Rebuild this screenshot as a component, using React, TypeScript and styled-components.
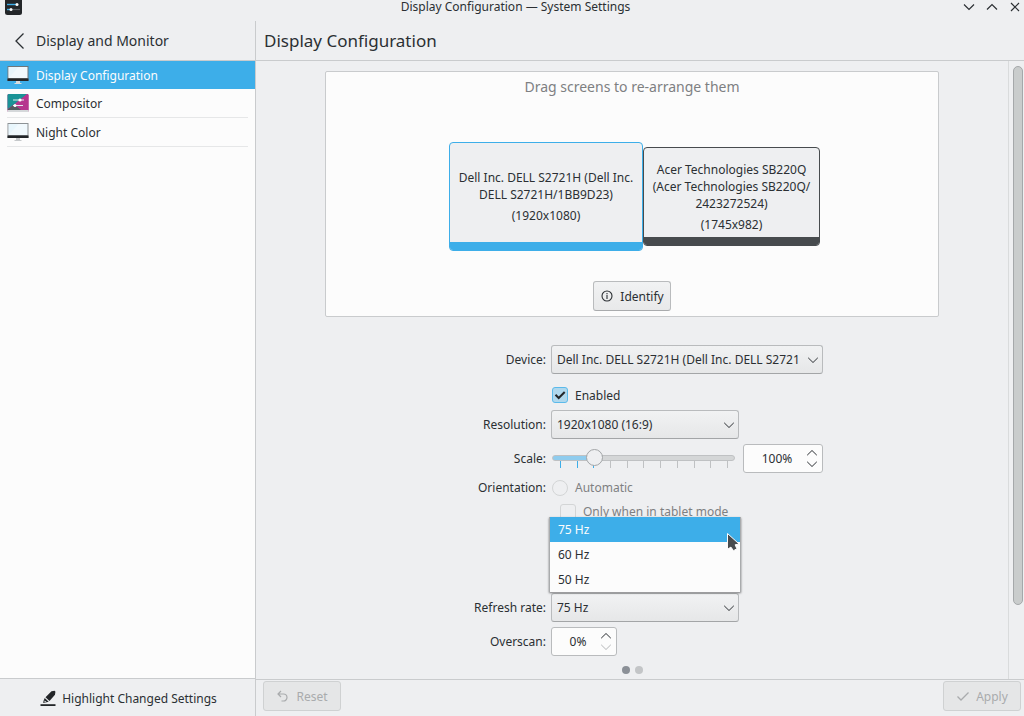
import React, { useState } from 'react';
import styled, { createGlobalStyle, css } from 'styled-components';

const c = {
  window: '#eeeff1',
  view: '#fcfcfc',
  text: '#2b2f33',
  muted: '#7e8082',
  disabled: '#a9abad',
  line: '#c9cbcd',
  border: '#b9bbbd',
  accent: '#3daee9',
  dark: '#474b4e',
};

const GlobalStyle = createGlobalStyle`
  *, *::before, *::after { box-sizing: border-box; }
  body { margin: 0; background: ${c.window}; }
  body, button, input, select {
    font-family: "Noto Sans", sans-serif;
    font-size: 12px;
    line-height: 17px;
    color: ${c.text};
  }
  h1, h2, p, ul { margin: 0; padding: 0; font-weight: 400; }
  ul { list-style: none; }
`;

const Window = styled.div`
  min-height: 100vh;
  display: flex;
  flex-direction: column;
  background: ${c.window};
`;

const TitleBar = styled.header`
  display: grid;
  grid-template-columns: 64px 1fr 60px;
  height: 21px;
  padding: 0 2px 0 5px;
  align-items: start;
`;

const WindowTitle = styled.div`
  line-height: 14px;
  text-align: center;
`;

const WindowControls = styled.div`
  display: flex;
  justify-content: flex-end;
  gap: 9px;
`;

const PlainButton = styled.button`
  display: flex;
  align-items: center;
  justify-content: center;
  padding: 0;
  border: 0;
  background: none;
`;

const ControlButton = styled(PlainButton)`
  width: 14px;
  height: 14px;
`;

const Body = styled.div`
  flex: 1;
  display: grid;
  grid-template-columns: 256px minmax(0, 1fr);
`;

const Sidebar = styled.nav`
  display: flex;
  flex-direction: column;
  border-right: 1px solid ${c.line};
  background: ${c.view};
`;

const SidebarHeader = styled.div`
  display: flex;
  align-items: center;
  gap: 8px;
  height: 40px;
  padding-left: 12px;
  border-bottom: 1px solid ${c.line};
  background: ${c.window};
`;

const SidebarTitle = styled.h2`
  font-size: 14px;
  line-height: 20px;
`;

const BackButton = styled(PlainButton)`
  width: 16px;
  height: 20px;
`;

const NavList = styled.ul`
  flex: 1;
`;

const NavItem = styled.li<{ $active?: boolean }>`
  padding: 0 7px;
  ${p => p.$active && css`background: ${c.accent};`}
`;

const NavLink = styled.a<{ $active?: boolean }>`
  display: flex;
  align-items: center;
  gap: 7px;
  height: ${p => (p.$active ? 28 : 29)}px;
  color: ${p => (p.$active ? c.view : c.text)};
  border-bottom: ${p => (p.$active ? '0' : '1px solid #e6e7e8')};
  text-decoration: none;
`;

const SidebarFooter = styled.div`
  display: flex;
  justify-content: center;
  height: 38px;
  padding: 1px 0 0 2px;
  border-top: 1px solid ${c.line};
  background: ${c.window};
`;

const HighlightButton = styled(PlainButton)`
  gap: 6px;
`;

const Main = styled.main`
  display: flex;
  flex-direction: column;
  min-width: 0;
`;

const MainHeader = styled.div`
  display: flex;
  align-items: center;
  height: 40px;
  padding-left: 8px;
  border-bottom: 1px solid ${c.line};
`;

const PageTitle = styled.h1`
  font-size: 17px;
  line-height: 24px;
`;

const Scroller = styled.div`
  flex: 1;
  display: flex;
`;

const Content = styled.div`
  flex: 1;
  min-width: 0;
  padding: 10px 69px 0;
`;

const ScrollTrack = styled.div`
  width: 16px;
  padding: 5px 0 0 4px;
  border-left: 1px solid #d9dbdc;
`;

const ScrollThumb = styled.div`
  width: 10px;
  height: 88%;
  border: 1px solid #a5a8aa;
  border-radius: 5px;
  background: #c9cccc;
`;

const Arrangement = styled.section`
  display: flex;
  flex-direction: column;
  align-items: center;
  min-height: 246px;
  padding: 6px 0 5px;
  border: 1px solid ${c.line};
  border-radius: 2px;
  background: ${c.view};
`;

const Hint = styled.p`
  font-size: 14px;
  line-height: 18px;
  color: ${c.muted};
`;

const Screens = styled.div`
  flex: 1;
  display: flex;
  align-items: center;
  padding: 16px 0 0 5px;
`;

const Screen = styled.div<{ $primary?: boolean }>`
  position: relative;
  display: flex;
  flex-direction: column;
  align-items: center;
  justify-content: center;
  gap: 4px;
  width: ${p => (p.$primary ? 194 : 177)}px;
  height: ${p => (p.$primary ? 109 : 99)}px;
  padding: 0 5px;
  border: 1px solid ${p => (p.$primary ? c.accent : c.dark)};
  border-radius: 4px;
  background: ${c.window};
  text-align: center;
  overflow: hidden;

  &::after {
    content: '';
    position: absolute;
    inset: auto 0 0;
    height: 8px;
    background: ${p => (p.$primary ? c.accent : c.dark)};
  }
`;

const PushButton = styled.button`
  display: flex;
  align-items: center;
  justify-content: center;
  gap: 6px;
  width: 78px;
  height: 30px;
  padding: 0;
  border: 1px solid ${c.border};
  border-bottom-color: #a9abad;
  border-radius: 3px;
  background: linear-gradient(#f1f2f3, #e8e9ea);

  &:disabled {
    color: ${c.disabled};
    border-color: #cfd1d2;
    background: #e5e6e7;
  }
`;

const Form = styled.form`
  display: grid;
  grid-template-columns: 105px 272px;
  justify-content: center;
  gap: 5px;
  margin-top: 28px;
`;

const FieldLabel = styled.label`
  align-self: center;
  text-align: right;
`;

const Field = styled.div`
  grid-column: 2;
  display: flex;
  align-items: center;
  justify-content: space-between;
`;

const OptionRow = styled(Field)<{ $indent?: boolean; $spaced?: boolean }>`
  justify-content: flex-start;
  gap: 7px;
  height: ${p => (p.$spaced ? 26 : 19)}px;
  padding: ${p => (p.$spaced ? '6px' : '0')} 0 0 ${p => (p.$indent ? 9 : 1)}px;
`;

const ManualRow = styled(Field)`
  height: 62px;
`;

const SelectBox = styled.div<{ $wide?: boolean }>`
  position: relative;
  width: ${p => (p.$wide ? 272 : 188)}px;
  height: 29px;
`;

const Select = styled.select`
  appearance: none;
  width: 100%;
  height: 100%;
  padding: 0 17px 0 5px;
  border: 1px solid ${c.border};
  border-bottom-color: #a3a5a7;
  border-radius: 3px;
  background: linear-gradient(#f1f2f3, #e6e7e8);
`;

const SelectArrow = styled.span`
  position: absolute;
  inset: 0 4px 0 auto;
  display: flex;
  align-items: center;
  pointer-events: none;
`;

const Check = styled.input`
  appearance: none;
  width: 16px;
  height: 16px;
  margin: 0;
  border: 1px solid #d3d5d6;
  border-radius: ${p => (p.type === 'radio' ? 8 : 3)}px;

  &:checked {
    border-color: #5bbaeb;
    background: #b0d8ed;
  }
`;

const CheckBox = styled.span`
  position: relative;
  display: flex;

  svg {
    position: absolute;
    inset: 0;
    pointer-events: none;
  }
`;

const OptionLabel = styled.label<{ $disabled?: boolean }>`
  ${p => p.$disabled && css`color: ${c.muted};`}
`;

const SliderBox = styled.div`
  width: 184px;
  height: 29px;
  padding: 5px 0 0 1px;
`;

const Slider = styled.input`
  appearance: none;
  display: block;
  position: relative;
  width: 183px;
  height: 18px;
  margin: 0 0 -6px;
  background: none;

  &::-webkit-slider-runnable-track {
    height: 6px;
    border: 1px solid #bfc1c3;
    border-radius: 3px;
    background: linear-gradient(to right, #8fccee 22%, #d4d6d7 22%);
  }

  &::-webkit-slider-thumb {
    appearance: none;
    width: 17px;
    height: 17px;
    margin-top: -7px;
    border: 1px solid #a2a5a7;
    border-radius: 9px;
    background: ${c.window};
  }
`;

const Ticks = styled.div`
  display: flex;
  justify-content: space-between;
  padding: 0 7px 0 8px;
`;

const Tick = styled.span<{ $filled: boolean }>`
  width: 1px;
  height: 7px;
  background: ${p => (p.$filled ? c.accent : '#bfc1c3')};
`;

const SpinBox = styled.div<{ $small?: boolean }>`
  display: flex;
  width: ${p => (p.$small ? 66 : 80)}px;
  height: 29px;
  border: 1px solid ${c.border};
  border-radius: 3px;
  background: ${c.view};
`;

const SpinInput = styled.input`
  flex: 1;
  min-width: 0;
  padding: 0 0 0 4px;
  border: 0;
  background: none;
  text-align: center;
`;

const SpinButtons = styled.div`
  display: flex;
  flex-direction: column;
  justify-content: center;
  gap: 1px;
  width: 16px;
`;

const SpinButton = styled(PlainButton)`
  height: 10px;
  justify-content: flex-start;

  &:disabled { color: #b5b7b9; }
`;

const Popup = styled.ul`
  position: absolute;
  left: -2px;
  right: -2px;
  bottom: calc(100% + 1px);
  z-index: 1;
  border: solid #a9abad;
  border-width: 0 1px;
  background: ${c.view};
  box-shadow: 0 1px 2px rgba(0, 0, 0, 0.5);
`;

const PopupItem = styled.li<{ $active: boolean }>`
  display: flex;
  align-items: center;
  height: 25px;
  padding-left: 8px;
  ${p => p.$active && css`
    background: ${c.accent};
    color: ${c.view};
  `}
`;

const Pointer = styled.svg`
  position: absolute;
  top: 15px;
  right: 0;
`;

const Dots = styled.div`
  display: flex;
  justify-content: center;
  gap: 5px;
  padding: 10px 0 4px;
`;

const Dot = styled.span<{ $current?: boolean }>`
  width: 8px;
  height: 8px;
  border-radius: 4px;
  background: ${p => (p.$current ? '#8b9097' : '#c3c5c7')};
`;

const MainFooter = styled.footer`
  display: flex;
  justify-content: space-between;
  height: 37px;
  padding: 1px 3px 0 7px;
  border-top: 1px solid ${c.line};
`;

const Chevron = ({ up = false, size = 12 }: { up?: boolean; size?: number }) => (
  <svg width={size} height={size === 12 ? 8 : 14} viewBox={size === 12 ? '0 0 12 8' : '0 0 14 14'} fill="none" stroke="currentColor">
    {size === 12
      ? <path d={up ? 'M1.200 6.200 6 1.500l4.800 4.700' : 'M1.200 1.800 6 6.500l4.800-4.700'} />
      : <path d={up ? 'M2 9.500l5-4.900 5 4.900' : 'M2 4.500l5 4.900 5-4.900'} strokeWidth="1.200" />}
  </svg>
);

const AppIcon = () => (
  <svg width="17" height="16" viewBox="0 0 17 16">
    <path d="M0 0h17v12.500a2.500 2.500 0 0 1-2.500 2.500h-12A2.500 2.500 0 0 1 0 12.500z" fill="#232629" />
    <path d="M2 4.500h9" stroke="#3daee9" strokeWidth="1.400" />
    <path d="M2 9.500h3" stroke="#3daee9" strokeWidth="1.400" />
    <path d="M6 9.500h9" stroke="#5a5f63" strokeWidth="1.200" />
    <circle cx="12" cy="4.500" r="1.500" fill="#fcfcfc" />
    <circle cx="6" cy="9.500" r="1.500" fill="#fcfcfc" />
  </svg>
);

const MonitorIcon = ({ pale = false }: { pale?: boolean }) => (
  <svg width="22" height="22" viewBox="0 0 22 22">
    <path d="M9 17h4v2h1.500v1h-7v-1H9z" fill={pale ? '#c5c8ca' : '#d9dcde'} />
    <path d="M.5 2h21v15H.5z" fill={pale ? '#8d9295' : '#707679'} />
    <path d="M1.500 3h19v11h-19z" fill="#f1f9fd" />
    <path d="M1.500 14V3h10z" fill="#e2f3fb" opacity=".6" />
    <path d="M.5 14.500h21V17H.5z" fill="#232629" />
  </svg>
);

const CompositorIcon = () => (
  <svg width="22" height="22" viewBox="0 0 22 22">
    <rect x=".5" y="2" width="21" height="18" rx="1" fill="#b03a8c" />
    <path d="M1.500 2h19L9 11l-8.500 6V3z" fill="#1a9396" />
    <path d="M21.500 3v15h-8L9 11 20 2z" fill="#b6368e" />
    <path d="M.5 17.500 7 12.500l7 5.500H.5z" fill="#535b60" />
    <path d="M.5 18h21v1.500l-.5.500H1l-.5-.5z" fill="#d5d8da" />
    <path d="M6 8h11M6 13.500h10" stroke="#dfe9ec" />
    <circle cx="13" cy="8" r="1.600" fill="#fff" />
    <circle cx="8" cy="13.500" r="1.500" fill="#fff" />
  </svg>
);

const HighlightIcon = () => (
  <svg width="16" height="16" viewBox="0 0 16 16" fill="#232629">
    <path d="M.5 14.200h15V16H.5z" />
    <path d="M11.500 1.300 14.600.8l.8 1-.4 3L9.500 11 5.500 7.300z" />
    <path d="m4.700 8 4 3.700-3.200.8-2.300.5L3.500 11z" />
    <path d="m4.500 10.500 2 1.500-2 .3z" fill="#eeeff1" />
  </svg>
);

const RATES = ['75 Hz', '60 Hz', '50 Hz'];
const TICKS = Array.from({ length: 11 }, (_, i) => 50 + i * 25);

export default function App() {
  const [rate, setRate] = useState('75 Hz');
  const [scale, setScale] = useState(100);
  const [enabled, setEnabled] = useState(true);

  return (
    <>
      <GlobalStyle />
      <Window>
        <TitleBar>
          <AppIcon />
          <WindowTitle>Display Configuration — System Settings</WindowTitle>
          <WindowControls>
            <ControlButton aria-label="Minimize"><Chevron size={14} /></ControlButton>
            <ControlButton aria-label="Maximize"><Chevron size={14} up /></ControlButton>
            <ControlButton aria-label="Close">
              <svg width="14" height="14" viewBox="0 0 14 14" stroke="currentColor" strokeWidth="1.200">
                <path d="m3 3 8 8m0-8-8 8" />
              </svg>
            </ControlButton>
          </WindowControls>
        </TitleBar>
        <Body>
          <Sidebar>
            <SidebarHeader>
              <BackButton aria-label="Back">
                <svg width="16" height="20" viewBox="0 0 16 20" fill="none" stroke="currentColor" strokeWidth="1.300">
                  <path d="M11.500 2.500 4 10l7.500 7.500" />
                </svg>
              </BackButton>
              <SidebarTitle>Display and Monitor</SidebarTitle>
            </SidebarHeader>
            <NavList>
              <NavItem $active>
                <NavLink $active href="#display"><MonitorIcon />Display Configuration</NavLink>
              </NavItem>
              <NavItem>
                <NavLink href="#compositor"><CompositorIcon />Compositor</NavLink>
              </NavItem>
              <NavItem>
                <NavLink href="#night-color"><MonitorIcon pale />Night Color</NavLink>
              </NavItem>
            </NavList>
            <SidebarFooter>
              <HighlightButton><HighlightIcon />Highlight Changed Settings</HighlightButton>
            </SidebarFooter>
          </Sidebar>
          <Main>
            <MainHeader><PageTitle>Display Configuration</PageTitle></MainHeader>
            <Scroller>
              <Content>
                <Arrangement>
                  <Hint>Drag screens to re-arrange them</Hint>
                  <Screens>
                    <Screen $primary>
                      <p>Dell Inc. DELL S2721H (Dell Inc. DELL S2721H/1BB9D23)</p>
                      <p>(1920x1080)</p>
                    </Screen>
                    <Screen>
                      <p>Acer Technologies SB220Q (Acer Technologies SB220Q/<wbr />2423272524)</p>
                      <p>(1745x982)</p>
                    </Screen>
                  </Screens>
                  <PushButton type="button">
                    <svg width="14" height="14" viewBox="0 0 14 14" fill="none" stroke="currentColor" strokeWidth="1.100">
                      <circle cx="7" cy="7" r="5" />
                      <path d="M7 6v4M7 4v1.200" />
                    </svg>
                    Identify
                  </PushButton>
                </Arrangement>
                <Form>
                  <FieldLabel htmlFor="device">Device:</FieldLabel>
                  <Field>
                    <SelectBox $wide>
                      <Select id="device"><option>Dell Inc. DELL S2721H (Dell Inc. DELL S2721</option></Select>
                      <SelectArrow><Chevron /></SelectArrow>
                    </SelectBox>
                  </Field>
                  <OptionRow $spaced>
                    <CheckBox>
                      <Check id="enabled" type="checkbox" checked={enabled} onChange={e => setEnabled(e.target.checked)} />
                      {enabled && (
                        <svg width="16" height="16" viewBox="0 0 16 16" fill="none" stroke="#232629" strokeWidth="2">
                          <path d="m3.500 7.800 3.200 3.200 6-6" />
                        </svg>
                      )}
                    </CheckBox>
                    <OptionLabel htmlFor="enabled">Enabled</OptionLabel>
                  </OptionRow>
                  <FieldLabel htmlFor="resolution">Resolution:</FieldLabel>
                  <Field>
                    <SelectBox>
                      <Select id="resolution"><option>1920x1080 (16:9)</option></Select>
                      <SelectArrow><Chevron /></SelectArrow>
                    </SelectBox>
                  </Field>
                  <FieldLabel htmlFor="scale">Scale:</FieldLabel>
                  <Field>
                    <SliderBox>
                      <Slider id="scale" type="range" min={50} max={300} step={25} value={scale} onChange={e => setScale(Number(e.target.value))} />
                      <Ticks>{TICKS.map(t => <Tick key={t} $filled={t <= scale} />)}</Ticks>
                    </SliderBox>
                    <SpinBox>
                      <SpinInput aria-label="Scale percentage" value={`${scale}%`} readOnly />
                      <SpinButtons>
                        <SpinButton type="button" aria-label="Increase scale"><Chevron up /></SpinButton>
                        <SpinButton type="button" aria-label="Decrease scale"><Chevron /></SpinButton>
                      </SpinButtons>
                    </SpinBox>
                  </Field>
                  <FieldLabel htmlFor="automatic">Orientation:</FieldLabel>
                  <OptionRow>
                    <Check id="automatic" type="radio" disabled />
                    <OptionLabel htmlFor="automatic" $disabled>Automatic</OptionLabel>
                  </OptionRow>
                  <OptionRow $indent>
                    <Check id="tablet" type="checkbox" disabled />
                    <OptionLabel htmlFor="tablet" $disabled>Only when in tablet mode</OptionLabel>
                  </OptionRow>
                  <ManualRow />
                  <FieldLabel htmlFor="rate">Refresh rate:</FieldLabel>
                  <Field>
                    <SelectBox>
                      <Select id="rate" value={rate} onChange={e => setRate(e.target.value)}>
                        {RATES.map(r => <option key={r}>{r}</option>)}
                      </Select>
                      <SelectArrow><Chevron /></SelectArrow>
                      <Popup role="listbox" aria-label="Refresh rate">
                        {RATES.map(r => (
                          <PopupItem key={r} role="option" aria-selected={r === rate} $active={r === rate} onClick={() => setRate(r)}>{r}</PopupItem>
                        ))}
                        <Pointer width="14" height="22" viewBox="0 0 14 22">
                          <path d="M1.500 1.500v15.800l3.400-2.200 2.600 3.600 3.400-2-1.800-3.900 4-.8z" fill="#474b4e" stroke="#fcfcfc" />
                        </Pointer>
                      </Popup>
                    </SelectBox>
                  </Field>
                  <FieldLabel htmlFor="overscan">Overscan:</FieldLabel>
                  <Field>
                    <SpinBox $small>
                      <SpinInput id="overscan" value="0%" readOnly />
                      <SpinButtons>
                        <SpinButton type="button" aria-label="Increase overscan"><Chevron up /></SpinButton>
                        <SpinButton type="button" aria-label="Decrease overscan" disabled><Chevron /></SpinButton>
                      </SpinButtons>
                    </SpinBox>
                  </Field>
                </Form>
                <Dots><Dot $current /><Dot /></Dots>
              </Content>
              <ScrollTrack><ScrollThumb /></ScrollTrack>
            </Scroller>
            <MainFooter>
              <PushButton type="button" disabled>
                <svg width="14" height="14" viewBox="0 0 14 14" fill="none" stroke="currentColor" strokeWidth="1.200">
                  <path d="M5 2 2 5l3 3M2 5h5.500a3.500 3.500 0 0 1 0 7H5.500" />
                </svg>
                Reset
              </PushButton>
              <PushButton type="button" disabled>
                <svg width="14" height="14" viewBox="0 0 14 14" fill="none" stroke="currentColor" strokeWidth="1.300">
                  <path d="m1.500 7.500 3.500 3.500L12.500 3.500" />
                </svg>
                Apply
              </PushButton>
            </MainFooter>
          </Main>
        </Body>
      </Window>
    </>
  );
}
